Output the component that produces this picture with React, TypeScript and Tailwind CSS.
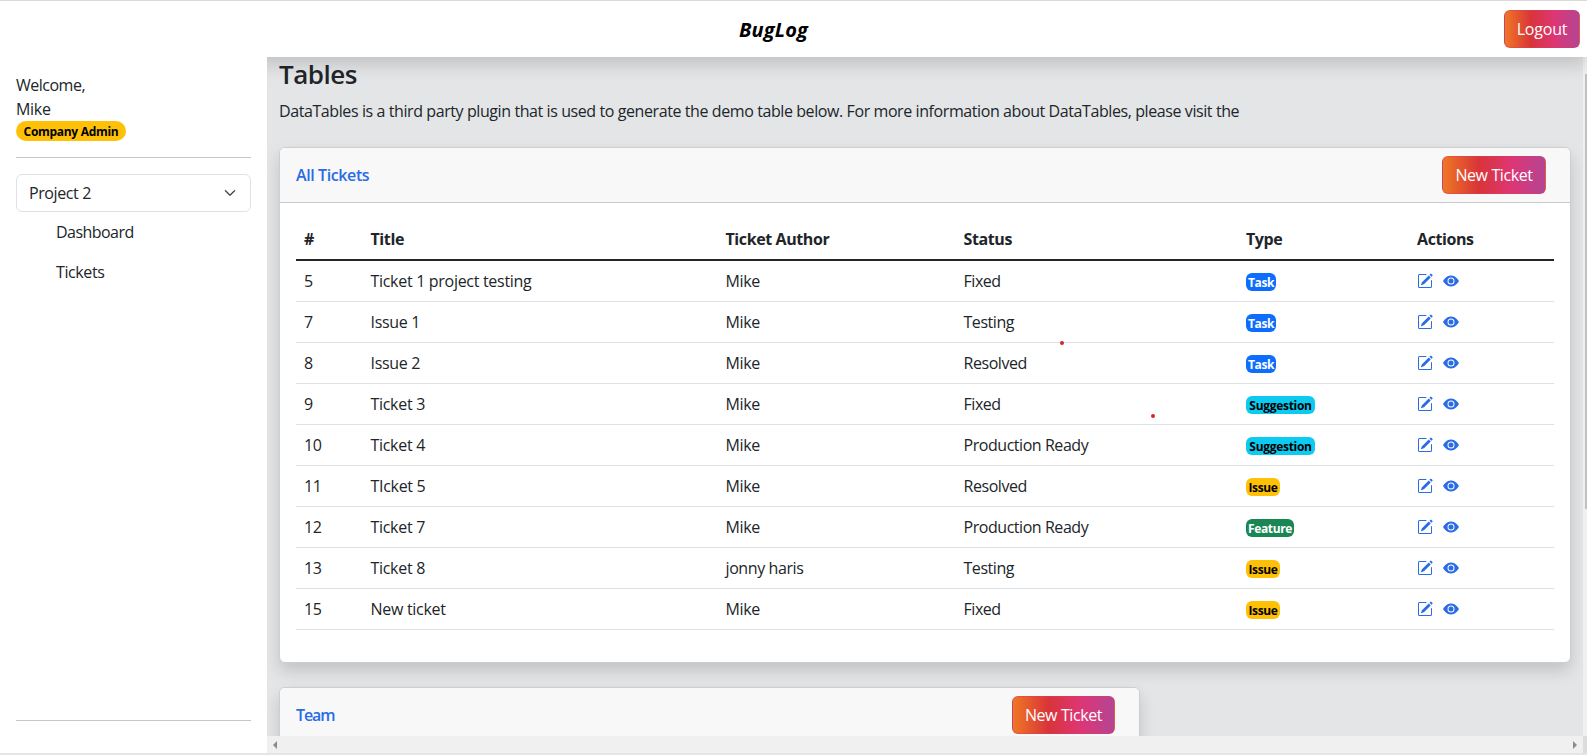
import { BsChevronDown, BsEyeFill, BsPencilSquare } from "react-icons/bs";

type Kind = "Task" | "Suggestion" | "Issue" | "Feature";

const badgeClass: Record<Kind, string> = {
  Task: "w-[30px] bg-[#0d6efd] text-white tracking-[-0.35px]",
  Suggestion: "w-[69px] bg-[#0dcaf0] text-black tracking-[-0.3px]",
  Issue: "w-[34px] bg-[#ffc107] text-black tracking-[-0.35px]",
  Feature: "w-[48px] bg-[#198754] text-white tracking-[-0.35px]",
};

const tickets: [number, string, string, string, Kind][] = [
  [5, "Ticket 1 project testing", "Mike", "Fixed", "Task"],
  [7, "Issue 1", "Mike", "Testing", "Task"],
  [8, "Issue 2", "Mike", "Resolved", "Task"],
  [9, "Ticket 3", "Mike", "Fixed", "Suggestion"],
  [10, "Ticket 4", "Mike", "Production Ready", "Suggestion"],
  [11, "TIcket 5", "Mike", "Resolved", "Issue"],
  [12, "Ticket 7", "Mike", "Production Ready", "Feature"],
  [13, "Ticket 8", "jonny haris", "Testing", "Issue"],
  [15, "New ticket", "Mike", "Fixed", "Issue"],
];

const columns = "grid grid-cols-[66.5px_355px_238px_282.5px_171px_1fr] pl-2";

function GradientButton({ label, className }: { label: string; className: string }) {
  return (
    <button
      className={`h-[38px] shrink-0 whitespace-nowrap rounded-md border border-[#d6405f]/50 bg-[linear-gradient(to_right,#ef7724,#d93439_35%,#dd3675_67%,#b44593)] text-base leading-none text-white ${className}`}
    >
      {label}
    </button>
  );
}

function CardHeader({ title, tracking, button }: { title: string; tracking: string; button: string }) {
  return (
    <div className="flex h-[55px] items-center justify-between border-b border-[#c9cacb] bg-[#f8f8f8] pl-4 pr-6">
      <h6 className={`text-base font-semibold text-[#2a6be6] ${tracking}`}>{title}</h6>
      <GradientButton label="New Ticket" className={`tracking-[-0.4px] ${button}`} />
    </div>
  );
}

const cardClass =
  "shrink-0 overflow-hidden rounded-md border border-[#cdced0] bg-white shadow-[0_8px_16px_rgba(0,0,0,0.15)]";

export default function App() {
  return (
    <div className="relative flex h-[755px] w-[1587px] flex-col overflow-hidden border-b-2 border-t border-b-[#e5e5e6] border-t-[#d9d9d9] bg-white font-['Open_Sans',sans-serif] text-base text-[#212529]">
      <header className="z-10 grid h-14 shrink-0 grid-cols-[1fr_auto_1fr] items-center bg-white pr-[7px] shadow-[0_8px_16px_rgba(0,0,0,0.15)]">
        <span />
        <h1 className="pr-[38px] pl-[5px] pt-0.5 text-xl font-bold italic tracking-[0.1px] text-black">BugLog</h1>
        <GradientButton label="Logout" className="w-[76px] justify-self-end tracking-[-0.2px]" />
      </header>

      <div className="flex min-h-0 flex-1">
        <aside className="z-20 flex w-[267px] shrink-0 flex-col bg-white px-4 pt-4">
          <p className="leading-6 tracking-[-0.5px]">Welcome,</p>
          <p className="leading-6 tracking-[-0.3px]">Mike</p>
          <span className="flex h-5 w-[110px] items-center justify-center rounded-full bg-[#ffc107] pt-0.5 text-xs font-bold tracking-[-0.3px] text-black">
            Company Admin
          </span>
          <hr className="mt-4 border-[#c4c6c8]" />
          <div className="mt-4 flex h-[38px] shrink-0 items-center justify-between rounded-md border border-[#dee2e6] pl-3 pr-3.5 tracking-[-0.4px]">
            Project 2
            <BsChevronDown size={12} strokeWidth={1} className="text-[#343a40]" />
          </div>
          <nav className="flex flex-col pl-10">
            <a className="flex h-10 items-center tracking-[-0.55px]">Dashboard</a>
            <a className="flex h-10 items-center tracking-[-0.4px]">Tickets</a>
          </nav>
          <hr className="mb-8 mt-auto border-[#c4c6c8]" />
        </aside>

        <main className="flex min-w-0 flex-1 flex-col">
          <div className="flex min-h-0 flex-1">
            <div className="flex min-w-0 flex-1 flex-col overflow-hidden bg-[#e3e5e7] pl-3 pr-3">
              <h2 className="text-[26px] font-semibold leading-[34px] tracking-[-0.5px]">Tables</h2>
              <p className="mt-2 whitespace-nowrap leading-6 tracking-[-0.41px]">
                DataTables is a third party plugin that is used to generate the demo table below. For more information
                about DataTables, please visit the
              </p>
              <section className={`mt-6 h-[516px] ${cardClass}`}>
                <CardHeader title="All Tickets" tracking="tracking-[-0.4px]" button="w-[104px]" />
                <div className="px-4 pt-4">
                  <div
                    className={`${columns} h-[42px] items-center border-b-2 border-[#212529] font-bold tracking-[-0.4px]`}
                  >
                    <span>#</span>
                    <span>Title</span>
                    <span>Ticket Author</span>
                    <span>Status</span>
                    <span>Type</span>
                    <span>Actions</span>
                  </div>
                  {tickets.map(([id, title, author, status, kind]) => (
                    <div
                      key={id}
                      className={`${columns} h-[41px] items-center border-b border-[#dee2e6] tracking-[-0.3px]`}
                    >
                      <span>{id}</span>
                      <span>{title}</span>
                      <span className="tracking-[-0.4px]">{author}</span>
                      <span className="tracking-[-0.45px]">{status}</span>
                      <span
                        className={`mt-0.5 flex h-[18px] items-center justify-center rounded-md pt-0.5 text-xs font-bold ${badgeClass[kind]}`}
                      >
                        {kind}
                      </span>
                      <span className="flex items-center gap-2.5 text-[#2a6be6]">
                        <BsPencilSquare size={16} />
                        <BsEyeFill size={16} />
                      </span>
                    </div>
                  ))}
                </div>
              </section>
              <section className={`mt-6 h-[200px] w-[861px] ${cardClass}`}>
                <CardHeader title="Team" tracking="tracking-[-1.1px]" button="w-[103px]" />
              </section>
            </div>
            <div className="flex w-1 shrink-0 justify-end bg-[#f0f0f0] pt-[17px]">
              <div className="h-[435px] w-0.5 bg-[#c1c1c1]" />
            </div>
          </div>
          <div className="flex h-[17px] shrink-0 items-center bg-[#f0f0f0]">
            <div className="flex flex-1 items-center justify-between px-1.5">
              <svg width="4" height="8" viewBox="0 0 4 8" fill="#8a8a8a">
                <path d="M4 0v8L0 4z" />
              </svg>
              <svg width="4" height="8" viewBox="0 0 4 8" fill="#8a8a8a">
                <path d="M0 0v8l4-4z" />
              </svg>
            </div>
            <div className="h-full w-1 bg-[#dcdcdc]" />
          </div>
        </main>
      </div>

      <span className="absolute left-[1060px] top-[340px] size-1 rounded-full bg-[#d6242c]" />
      <span className="absolute left-[1151px] top-[413px] size-1 rounded-full bg-[#d6242c]" />
    </div>
  );
}
